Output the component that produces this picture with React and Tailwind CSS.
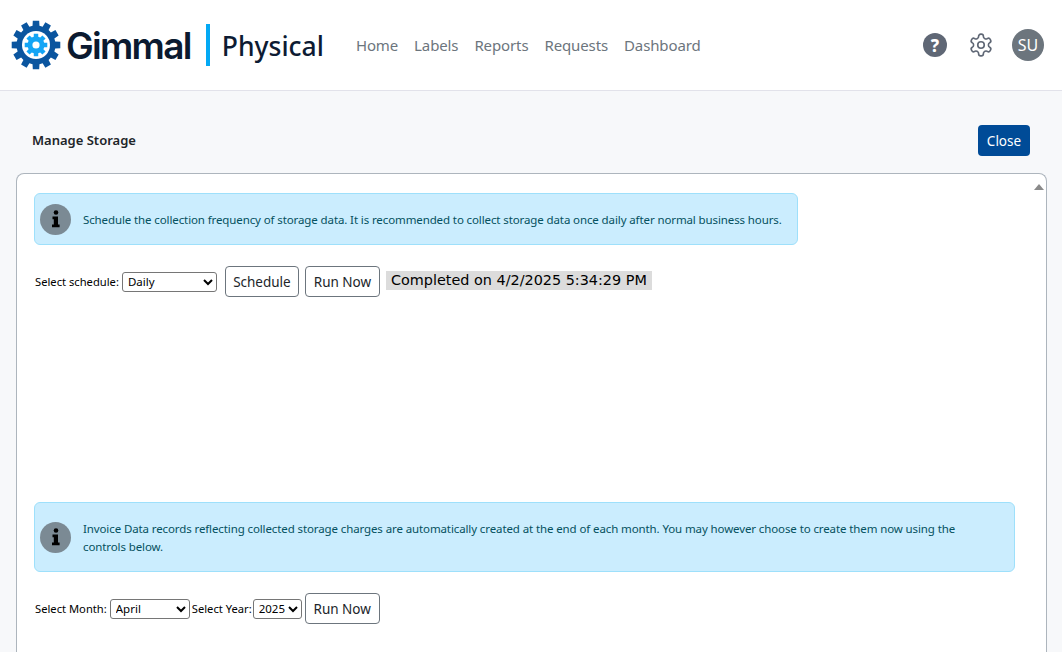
import React from "react";

function gearPath(cx, cy, rOut, rIn, teeth, topFrac = 0.45, baseFrac = 0.62) {
  let d = "";
  const step = (Math.PI * 2) / teeth;
  for (let i = 0; i < teeth; i++) {
    const a = i * step - Math.PI / 2;
    const pts = [
      [rIn, a - (step * baseFrac) / 2],
      [rOut, a - (step * topFrac) / 2],
      [rOut, a + (step * topFrac) / 2],
      [rIn, a + (step * baseFrac) / 2],
    ];
    pts.forEach(([r, t], j) => {
      d += `${i === 0 && j === 0 ? "M" : "L"}${(cx + r * Math.cos(t)).toFixed(2)} ${(cy + r * Math.sin(t)).toFixed(2)}`;
    });
  }
  return d + "Z";
}

function Logo() {
  return (
    <svg width="50" height="50" viewBox="0 0 50 50" className="shrink-0">
      <path d={gearPath(25, 25, 24.5, 19.5, 12, 0.5, 0.68)} fill="#0a559f" />
      <circle cx="25" cy="25" r="14" fill="#fff" />
      <path d={gearPath(25, 25, 11.5, 8.5, 8, 0.5, 0.68)} fill="#14a5f5" />
      <circle cx="25" cy="25" r="3.6" fill="#fff" />
    </svg>
  );
}

function InfoBadge() {
  return (
    <div className="w-[31px] h-[31px] rounded-full bg-[#7b8a94] flex items-center justify-center shrink-0">
      <svg width="10" height="18" viewBox="0 0 10 18" fill="#000">
        <circle cx="5" cy="2.5" r="2.3" />
        <path d="M1.5 6.5h5.5v8h1.6v2.8H1v-2.8h1.8V9.2H1.5z" />
      </svg>
    </div>
  );
}

function Btn({ w, children }) {
  return (
    <button
      className="h-[31px] pt-[2px] rounded-[4px] border border-[#6c757d] bg-white text-[13.5px] text-[#212529] leading-none"
      style={{ width: w }}
    >
      {children}
    </button>
  );
}

function Sel({ w, value, options }) {
  return (
    <select
      defaultValue={value}
      className="h-[20px] pl-[1px] rounded-[3px] border border-[#767676] bg-white text-[11.5px] text-black"
      style={{ width: w, appearance: "auto" }}
    >
      {options.map((o) => (
        <option key={o}>{o}</option>
      ))}
    </select>
  );
}

export default function App() {
  return (
    <div className="w-[1062px] h-[652px] overflow-hidden bg-[#f7f8fa] flex flex-col font-['Noto_Sans',sans-serif] text-[#212529]">
      <header className="h-[91px] shrink-0 bg-white border-b border-[#e2e2ea] flex items-center pl-[11px] pr-[18px]">
        <Logo />
        <span className="ml-[5px] text-[37px] font-semibold tracking-[-1.7px] text-[#0b1a30] font-['Inter',sans-serif] leading-none">
          Gimmal
        </span>
        <div className="ml-[15px] w-[4px] h-[42px] bg-[#03a9f4]" />
        <span className="ml-[12px] pt-[3px] text-[26.5px] font-medium text-[#0d1b33] leading-none">Physical</span>
        <nav className="ml-[32px] flex gap-[16px] text-[15px] tracking-[-0.12px] text-[#6c757d]">
          <span>Home</span>
          <span>Labels</span>
          <span>Reports</span>
          <span>Requests</span>
          <span>Dashboard</span>
        </nav>
        <div className="ml-auto flex items-center">
          <div className="w-[24px] h-[24px] rounded-full bg-[#5f6775] flex items-center justify-center text-white text-[17px] font-extrabold leading-none">
            ?
          </div>
          <svg className="ml-[21px]" width="26" height="26" viewBox="0 0 24 24" fill="none" stroke="#5f6775" strokeWidth="1.5" strokeLinejoin="round">
            <path d="M12.22 2h-.44a2 2 0 0 0-2 2v.18a2 2 0 0 1-1 1.73l-.43.25a2 2 0 0 1-2 0l-.15-.08a2 2 0 0 0-2.73.73l-.22.38a2 2 0 0 0 .73 2.73l.15.1a2 2 0 0 1 1 1.72v.51a2 2 0 0 1-1 1.74l-.15.09a2 2 0 0 0-.73 2.73l.22.38a2 2 0 0 0 2.73.73l.15-.08a2 2 0 0 1 2 0l.43.25a2 2 0 0 1 1 1.73V20a2 2 0 0 0 2 2h.44a2 2 0 0 0 2-2v-.18a2 2 0 0 1 1-1.73l.43-.25a2 2 0 0 1 2 0l.15.08a2 2 0 0 0 2.73-.73l.22-.39a2 2 0 0 0-.73-2.73l-.15-.08a2 2 0 0 1-1-1.74v-.5a2 2 0 0 1 1-1.74l.15-.09a2 2 0 0 0 .73-2.73l-.22-.38a2 2 0 0 0-2.73-.73l-.15.08a2 2 0 0 1-2 0l-.43-.25a2 2 0 0 1-1-1.73V4a2 2 0 0 0-2-2z" />
            <circle cx="12" cy="12" r="3" />
          </svg>
          <div className="ml-[18px] w-[32px] h-[32px] rounded-full bg-[#6c757d] flex items-center justify-center text-white text-[16px] leading-none">
            SU
          </div>
        </div>
      </header>

      <main className="flex-1 min-h-0 flex flex-col pl-[16px] pr-[15px]">
        <div className="h-[82px] shrink-0 flex items-center justify-between pl-[16px] pt-[16px]">
          <h1 className="pt-[1px] text-[13px] font-semibold text-[#212529]">Manage Storage</h1>
          <button className="h-[31px] w-[52px] pt-[3px] mr-[17px] rounded-[4px] bg-[#004b97] text-white text-[13.5px] leading-none">Close</button>
        </div>
        <div className="flex-1 min-h-0 bg-white border border-[#adb5bd] border-b-0 rounded-t-[8px] flex">
          <div className="flex-1 min-w-0 pl-[17px] pt-[19px]">
            <div className="w-[764px] h-[52px] rounded-[6px] border border-[#9ee0fb] bg-[#cbedfe] flex items-center pl-[5px]">
              <InfoBadge />
              <p className="ml-[12px] pt-[2px] text-[11.5px] tracking-[-0.11px] whitespace-nowrap text-[#055160]">
                Schedule the collection frequency of storage data. It is recommended to collect storage data once daily after normal business hours.
              </p>
            </div>
            <div className="mt-[21px] h-[31px] flex items-center pl-[1px] text-[11.2px] text-black">
              <span className="pt-[2px]">Select schedule:</span>
              <span className="ml-[3px] flex">
                <Sel w="95px" value="Daily" options={["Daily", "Weekly", "Monthly"]} />
              </span>
              <span className="ml-[8px] flex"><Btn w="74px">Schedule</Btn></span>
              <span className="ml-[6px] flex"><Btn w="75px">Run Now</Btn></span>
              <span className="ml-[6px] self-start mt-[5px] h-[19px] w-[266px] bg-[#dcdcdc] pl-[5px] text-[14.4px] leading-[19px] text-black whitespace-nowrap" style={{ fontFamily: "'DejaVu Sans', sans-serif" }}>
                Completed on 4/2/2025 5:34:29 PM
              </span>
            </div>
            <div className="mt-[205px] w-[981px] h-[70px] rounded-[6px] border border-[#9ee0fb] bg-[#cbedfe] flex items-center pl-[5px]">
              <InfoBadge />
              <p className="ml-[12px] pr-[40px] pt-[1px] text-[11.5px] tracking-[-0.11px] leading-[18px] text-[#055160]">
                Invoice Data records reflecting collected storage charges are automatically created at the end of each month. You may however choose to create them now using the controls below.
              </p>
            </div>
            <div className="mt-[21px] h-[31px] flex items-center pl-[1px] text-[11.2px] text-black">
              <span className="pt-[1px]">Select Month:</span>
              <span className="ml-[3px] flex">
                <Sel w="80px" value="April" options={["April", "May", "June"]} />
              </span>
              <span className="ml-[2px] pt-[1px]">Select Year:</span>
              <span className="ml-[1px] flex">
                <Sel w="49px" value="2025" options={["2025", "2024"]} />
              </span>
              <span className="ml-[3px] flex"><Btn w="75px">Run Now</Btn></span>
            </div>
          </div>
          <div className="w-[15px] shrink-0 flex justify-center pt-[10px]">
            <div className="w-0 h-0 border-l-[5px] border-r-[5px] border-b-[6px] border-l-transparent border-r-transparent border-b-[#8a8a8a]" />
          </div>
        </div>
      </main>
    </div>
  );
}
